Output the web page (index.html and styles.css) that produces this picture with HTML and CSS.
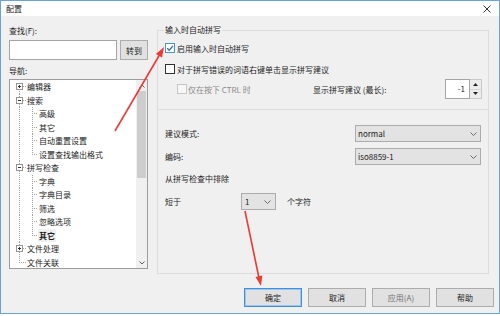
FILE: index.html
```html
<!DOCTYPE html>
<html lang="zh">
<head>
<meta charset="utf-8">
<title>配置</title>
<link rel="stylesheet" href="styles.css">
</head>
<body>
<div class="win">
  <div class="titlebar">
    <span class="title">配置</span>
    <svg class="close" viewBox="0 0 8 8"><path d="M0.5 0.5L7.5 7.5M7.5 0.5L0.5 7.5" /></svg>
  </div>
  <div class="main">
    <div class="left">
      <div class="lbl find">查找(F):</div>
      <div class="findrow">
        <div class="textbox"></div>
        <button class="btn goto">转到</button>
      </div>
      <div class="lbl nav">导航:</div>
      <div class="tree">
        <div class="items">
          <div class="row r0 first"><i class="exp plus"></i><span>编辑器</span></div>
          <div class="row r0"><i class="exp minus"></i><span>搜索</span></div>
          <div class="row r1">高级</div>
          <div class="row r1">其它</div>
          <div class="row r1">自动重置设置</div>
          <div class="row r1 last">设置查找输出格式</div>
          <div class="row r0"><i class="exp minus"></i><span>拼写检查</span></div>
          <div class="row r1">字典</div>
          <div class="row r1">字典目录</div>
          <div class="row r1">筛选</div>
          <div class="row r1">忽略选项</div>
          <div class="row r1 last"><span class="sel">其它</span></div>
          <div class="row r0"><i class="exp plus"></i><span>文件处理</span></div>
          <div class="row r0 last"><i class="exp none"></i><span>文件关联</span></div>
        </div>
        <div class="vscroll">
          <div class="sb up"><svg viewBox="0 0 6 4"><path d="M0.5 3.5L3 1L5.5 3.5" /></svg></div>
          <div class="thumb"></div>
          <div class="sb down"><svg viewBox="0 0 6 4"><path d="M0.5 0.5L3 3L5.5 0.5" /></svg></div>
        </div>
      </div>
    </div>
    <fieldset class="panel">
      <legend>输入时自动拼写</legend>
      <div class="group">
        <div class="cbrow first">
          <span class="cb checked"><svg viewBox="0 0 8 8"><path d="M1.2 4.2L3.2 6.2L7 1.8" /></svg></span>
          <span>启用输入时自动拼写</span>
        </div>
        <div class="cbrow second">
          <span class="cb"></span>
          <span>对于拼写错误的词语右键单击显示拼写建议</span>
        </div>
        <div class="row3">
          <div class="cbsub">
            <span class="cb disabled"></span>
            <span class="distext">仅在按下 CTRL 时</span>
          </div>
          <span>显示拼写建议 (最长):</span>
          <div class="spin">
            <div class="val">-1</div>
            <div class="spinbtns">
              <div class="sbtn"><svg viewBox="0 0 5 3"><path d="M0 3L2.5 0L5 3Z" /></svg></div>
              <div class="sbtn"><svg viewBox="0 0 5 3"><path d="M0 0L2.5 3L5 0Z" /></svg></div>
            </div>
          </div>
        </div>
      </div>
      <div class="opts">
        <div class="orow">
          <span class="olbl">建议模式:</span>
          <div class="combo wide"><span>normal</span><svg class="chev" viewBox="0 0 7 4"><path d="M0.5 0.5L3.5 3.5L6.5 0.5" /></svg></div>
        </div>
        <div class="orow gap">
          <span class="olbl">编码:</span>
          <div class="combo wide"><span>iso8859-1</span><svg class="chev" viewBox="0 0 7 4"><path d="M0.5 0.5L3.5 3.5L6.5 0.5" /></svg></div>
        </div>
        <div class="excl">从拼写检查中排除</div>
        <div class="orow short">
          <span class="slbl">短于</span>
          <div class="combo small"><span>1</span><svg class="chev" viewBox="0 0 7 4"><path d="M0.5 0.5L3.5 3.5L6.5 0.5" /></svg></div>
          <span class="unit">个字符</span>
        </div>
      </div>
    </fieldset>
  </div>
  <div class="buttons">
    <button class="btn dlg default">确定</button>
    <button class="btn dlg">取消</button>
    <button class="btn dlg dis">应用(A)</button>
    <button class="btn dlg">帮助</button>
  </div>
</div>
<svg class="arrows" viewBox="0 0 500 316">
  <line x1="115" y1="131" x2="160" y2="54" />
  <polygon points="164,47 162,57.4 155.9,53.9" />
  <line x1="245" y1="211" x2="259" y2="278" />
  <polygon points="261,286 262.3,275.5 255.5,276.9" />
</svg>
</body>
</html>
```
FILE: styles.css
```css
* { box-sizing: border-box; }
html, body { margin: 0; padding: 0; }
body {
  position: relative;
  width: 500px;
  height: 316px;
  overflow: hidden;
  background: #ffffff;
  font-family: "Noto Sans CJK SC", "Noto Sans", sans-serif;
  font-size: 8px;
  color: #1b1b1b;
}
.win {
  width: 500px;
  height: 314px;
  border: 1px solid #6aa3dc;
  background: #f0f0f0;
  display: flex;
  flex-direction: column;
}
.titlebar {
  flex: none;
  height: 15px;
  background: #ffffff;
  display: flex;
  align-items: center;
  padding-left: 5px;
}
.title { line-height: 12px; }
.close {
  margin-left: auto;
  margin-right: 8px;
  width: 8px;
  height: 8px;
}
.close path { stroke: #333; stroke-width: 1; fill: none; }

.main {
  flex: none;
  display: flex;
  gap: 9px;
  padding: 8px 10px 0 8px;
}
.left {
  flex: none;
  width: 139px;
  display: flex;
  flex-direction: column;
}
.lbl { height: 12px; line-height: 12px; }
.lbl.find { margin-top: 1px; }
.lbl.nav { margin-top: 5px; }
.findrow {
  display: flex;
  justify-content: space-between;
  margin-top: 3px;
  height: 20px;
}
.textbox {
  width: 108px;
  height: 20px;
  background: #ffffff;
  border: 1px solid #a5a5a5;
}
.btn {
  font: inherit;
  color: inherit;
  padding: 0;
  margin: 0;
  background: #e1e1e1;
  border: 1px solid #adadad;
}
.btn.goto { width: 28px; height: 20px; }

.tree {
  --dv: repeating-linear-gradient(to bottom, #a3a3a3 0 1px, transparent 1px 2px);
  --dh: repeating-linear-gradient(to right, #a3a3a3 0 1px, transparent 1px 2px);
  margin-top: 2px;
  height: 190px;
  border: 1px solid #9c9c9c;
  background: #ffffff;
  display: flex;
}
.items { flex: 1; min-width: 0; }
.row {
  height: 13.5px;
  line-height: 13.5px;
  white-space: nowrap;
  display: flex;
  align-items: center;
}
.r0 {
  padding-left: 6px;
  background:
    var(--dh) 9px 50% / 7px 1px no-repeat,
    var(--dv) 9px 0 / 1px 100% no-repeat;
}
.r0.first {
  background:
    var(--dh) 9px 50% / 7px 1px no-repeat,
    var(--dv) 9px 100% / 1px 50% no-repeat;
}
.r0.last {
  background:
    var(--dh) 9px 50% / 7px 1px no-repeat,
    var(--dv) 9px 0 / 1px 50% no-repeat;
}
.r1 {
  padding-left: 29px;
  background:
    var(--dh) 22px 50% / 5px 1px no-repeat,
    var(--dv) 22px 0 / 1px 100% no-repeat,
    var(--dv) 9px 0 / 1px 100% no-repeat;
}
.r1.last {
  background:
    var(--dh) 22px 50% / 5px 1px no-repeat,
    var(--dv) 22px 0 / 1px 50% no-repeat,
    var(--dv) 9px 0 / 1px 100% no-repeat;
}
.exp {
  flex: none;
  width: 7px;
  height: 7px;
  margin-right: 4px;
  border: 1px solid #959595;
  background: #ffffff;
}
.exp.minus {
  background: linear-gradient(#333, #333) center / 3px 1px no-repeat, #ffffff;
}
.exp.plus {
  background:
    linear-gradient(#333, #333) center / 3px 1px no-repeat,
    linear-gradient(#333, #333) center / 1px 3px no-repeat,
    #ffffff;
}
.exp.none { visibility: hidden; }
.sel {
  font-weight: bold;
  background: #f0f0f0;
  padding: 0 1px;
  margin-left: -1px;
}

.vscroll {
  flex: none;
  width: 11px;
  background: #f0f0f0;
  display: flex;
  flex-direction: column;
  align-items: center;
}
.sb {
  width: 11px;
  height: 11px;
  display: flex;
  align-items: center;
  justify-content: center;
}
.sb svg { width: 6px; height: 4px; }
.sb path { stroke: #606060; stroke-width: 1; fill: none; }
.sb.down { margin-top: auto; }
.thumb { width: 9px; height: 87px; background: #cdcdcd; }

.panel {
  flex: none;
  margin: 0;
  padding: 0;
  min-width: 0;
  width: 332px;
  height: 250px;
  border: 1px solid #dcdcdc;
}
.panel legend {
  margin-left: 6px;
  padding: 0 1px;
  height: 12px;
  line-height: 12px;
}
.group {
  height: 74px;
  border-bottom: 1px solid #dcdcdc;
  padding: 6px 6px 0 7px;
}
.cbrow {
  display: flex;
  align-items: center;
  height: 12px;
}
.cbrow.second { margin-top: 9px; }
.cb {
  flex: none;
  width: 10px;
  height: 10px;
  margin-right: 2px;
  border: 1px solid #333333;
  background: #ffffff;
  display: flex;
}
.cb svg { width: 8px; height: 8px; }
.cb path { stroke: #2a6fc2; stroke-width: 1.3; fill: none; }
.cb.checked { border-color: #4a92dc; }
.cb.disabled { border-color: #c6c6c6; background: #f7f7f7; margin-right: 1px; }
.row3 {
  display: flex;
  align-items: center;
  height: 20px;
  margin-top: 4px;
}
.cbsub {
  flex: none;
  width: 148px;
  padding-left: 12px;
  display: flex;
  align-items: center;
}
.distext { color: #8a8a8a; }
.spin {
  margin-left: auto;
  display: flex;
  height: 20px;
}
.spin .val {
  width: 25px;
  height: 20px;
  border: 1px solid #a5a5a5;
  background: #ffffff;
  text-align: right;
  padding-right: 4px;
  line-height: 18px;
}
.spinbtns {
  width: 12px;
  display: flex;
  flex-direction: column;
  border: 1px solid #c9c9c9;
  border-left: 0;
}
.sbtn {
  flex: 1;
  background: #ececec;
  display: flex;
  align-items: center;
  justify-content: center;
}
.sbtn + .sbtn { border-top: 1px solid #d6d6d6; }
.sbtn svg { width: 5px; height: 3px; }
.sbtn path { fill: #222; }

.opts {
  padding: 15px 6px 0 7px;
  display: flex;
  flex-direction: column;
}
.orow {
  display: flex;
  align-items: center;
  height: 17px;
}
.orow.gap { margin-top: 6px; }
.olbl { flex: none; width: 190px; }
.combo {
  height: 17px;
  display: flex;
  align-items: center;
  justify-content: space-between;
  background: #e3e3e3;
  border: 1px solid #acacac;
  padding: 0 3px 0 2px;
}
.combo.wide { width: 126px; }
.combo.small { width: 35px; padding-left: 3px; padding-right: 4px; }
.chev { width: 7px; height: 4px; }
.chev path { stroke: #6b6b6b; stroke-width: 1; fill: none; }
.excl { margin-top: 8px; height: 12px; line-height: 12px; }
.orow.short { margin-top: 8px; }
.slbl { flex: none; width: 76px; }
.unit { margin-left: 11px; }

.buttons {
  flex: none;
  display: flex;
  justify-content: flex-end;
  gap: 6px;
  margin-top: 14px;
  padding-right: 5px;
}
.btn.dlg { width: 58px; height: 19px; }
.btn.default { border-color: #3c8fe3; box-shadow: inset 0 0 0 1px #9cc8f0; }
.btn.dis { color: #6f6f6f; }

.arrows {
  position: absolute;
  left: 0;
  top: 0;
  width: 500px;
  height: 316px;
  pointer-events: none;
}
.arrows line { stroke: #ec3b34; stroke-width: 1.6; }
.arrows polygon { fill: #ec3b34; }
```
